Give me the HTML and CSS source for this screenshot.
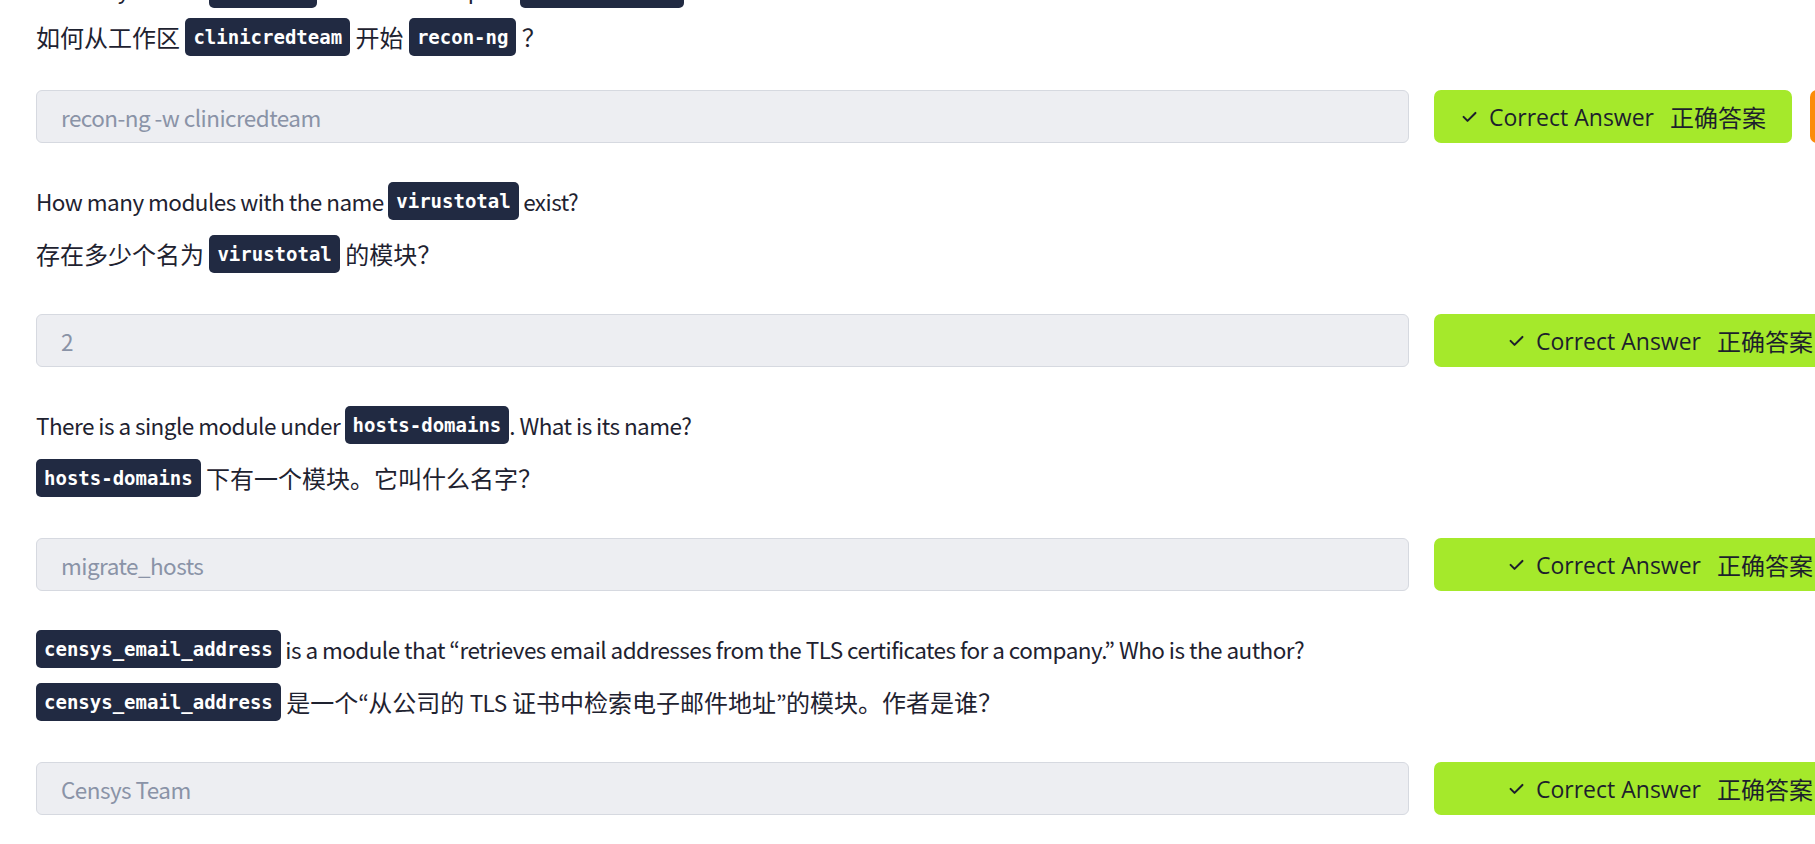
FILE: index.html
```html
<!DOCTYPE html>
<html lang="zh-CN">
<head>
<meta charset="utf-8">
<title>recon-ng questions</title>
<link rel="stylesheet" href="styles.css">
</head>
<body>
<main class="page">
  <section class="question question--first">
    <p class="q-en" lang="en">How do you start <code class="tag">recon-ng</code> with the workspace <code class="tag">clinicredteam</code>?</p>
    <p class="q-cn">如何从工作区 <code class="tag">clinicredteam</code> 开始 <code class="tag">recon-ng</code> ？</p>
    <div class="answer-row">
      <input class="answer" type="text" readonly value="recon-ng -w clinicredteam">
      <div class="actions">
        <button class="btn-correct btn-correct--compact" type="button">
          <svg class="check" viewBox="0 0 24 24" width="19" height="19" aria-hidden="true"><path d="M4.5 12.5l5 5L19.5 7.5" fill="none" stroke="currentColor" stroke-width="2.6" stroke-linecap="round" stroke-linejoin="round"/></svg>
          <span class="label-en">Correct Answer</span>
          <span class="label-cn">正确答案</span>
        </button>
        <button class="btn-next" type="button"></button>
      </div>
    </div>
  </section>

  <section class="question">
    <p class="q-en" lang="en">How many modules with the name <code class="tag">virustotal</code> exist?</p>
    <p class="q-cn">存在多少个名为 <code class="tag">virustotal</code> 的模块？</p>
    <div class="answer-row">
      <input class="answer" type="text" readonly value="2">
      <div class="actions">
        <button class="btn-correct" type="button">
          <svg class="check" viewBox="0 0 24 24" width="19" height="19" aria-hidden="true"><path d="M4.5 12.5l5 5L19.5 7.5" fill="none" stroke="currentColor" stroke-width="2.6" stroke-linecap="round" stroke-linejoin="round"/></svg>
          <span class="label-en">Correct Answer</span>
          <span class="label-cn">正确答案</span>
        </button>
      </div>
    </div>
  </section>

  <section class="question">
    <p class="q-en" lang="en">There is a single module under <code class="tag">hosts-domains</code>. What is its name?</p>
    <p class="q-cn"><code class="tag">hosts-domains</code> 下有一个模块。它叫什么名字？</p>
    <div class="answer-row">
      <input class="answer" type="text" readonly value="migrate_hosts">
      <div class="actions">
        <button class="btn-correct" type="button">
          <svg class="check" viewBox="0 0 24 24" width="19" height="19" aria-hidden="true"><path d="M4.5 12.5l5 5L19.5 7.5" fill="none" stroke="currentColor" stroke-width="2.6" stroke-linecap="round" stroke-linejoin="round"/></svg>
          <span class="label-en">Correct Answer</span>
          <span class="label-cn">正确答案</span>
        </button>
      </div>
    </div>
  </section>

  <section class="question">
    <p class="q-en" lang="en"><code class="tag">censys_email_address</code> is a module that “retrieves email addresses from the TLS certificates for a company.” Who is the author?</p>
    <p class="q-cn"><code class="tag">censys_email_address</code> 是一个<span class="latin" lang="en">“</span>从公司的 <span class="latin" lang="en">TLS</span> 证书中检索电子邮件地址<span class="latin" lang="en">”</span>的模块。作者是谁？</p>
    <div class="answer-row">
      <input class="answer" type="text" readonly value="Censys Team">
      <div class="actions">
        <button class="btn-correct" type="button">
          <svg class="check" viewBox="0 0 24 24" width="19" height="19" aria-hidden="true"><path d="M4.5 12.5l5 5L19.5 7.5" fill="none" stroke="currentColor" stroke-width="2.6" stroke-linecap="round" stroke-linejoin="round"/></svg>
          <span class="label-en">Correct Answer</span>
          <span class="label-cn">正确答案</span>
        </button>
      </div>
    </div>
  </section>
</main>
</body>
</html>
```

FILE: styles.css
```css
html, body {
  margin: 0;
  padding: 0;
  overflow: hidden;
  background: #ffffff;
}

body {
  font-family: "Noto Sans CJK SC", "Noto Sans", sans-serif;
  font-size: 24px;
  color: #1e2230;
}

.page {
  padding-left: 36px;
  margin-top: -30px;
}

.question + .question {
  margin-top: 39px;
}

.q-en,
.q-cn {
  margin: 0;
  height: 38px;
  line-height: 38px;
  white-space: nowrap;
}

.q-en {
  margin-bottom: 15px;
  font-family: "Noto Sans CJK JP", "Noto Sans CJK SC", sans-serif;
  font-size: 22.5px;
  letter-spacing: -0.55px;
}

.question--first .q-en {
  margin-bottom: 10px;
}

.latin {
  font-family: "Noto Sans CJK JP", sans-serif;
  font-size: 22.5px;
  letter-spacing: -0.55px;
}

.tag {
  display: inline-block;
  box-sizing: border-box;
  height: 38px;
  padding: 0 8px;
  line-height: 38px;
  vertical-align: top;
  background: #212a42;
  color: #ffffff;
  border-radius: 5px;
  font-family: "DejaVu Sans Mono", "Liberation Mono", monospace;
  font-weight: bold;
  font-size: 19px;
  letter-spacing: 0;
}

.answer-row {
  display: flex;
  align-items: center;
  gap: 25px;
  margin-top: 41px;
}

.question--first .answer-row {
  margin-top: 34px;
}

.answer {
  flex: 0 0 auto;
  box-sizing: border-box;
  width: 1373px;
  height: 53px;
  padding: 0 24px;
  border: 1px solid #d6d9e0;
  border-radius: 6px;
  background: #edeef2;
  color: #8a93a7;
  font-family: "Noto Sans CJK JP", "Noto Sans CJK SC", sans-serif;
  font-size: 22.5px;
  letter-spacing: -0.55px;
  outline: none;
}

.actions {
  display: flex;
  gap: 18px;
  flex: 0 0 auto;
}

.btn-correct {
  flex: 0 0 auto;
  box-sizing: border-box;
  width: 452px;
  height: 53px;
  border: none;
  border-radius: 7px;
  background: #a5e92b;
  color: #1d1f2c;
  display: flex;
  align-items: center;
  justify-content: center;
  padding: 0;
  cursor: pointer;
}

.btn-correct--compact {
  width: 358px;
}

.check {
  flex: 0 0 auto;
  margin-right: 10px;
}

.label-en {
  font-family: "Open Sans", "Noto Sans", sans-serif;
  font-size: 23px;
  margin-right: 16px;
}

.label-cn {
  font-family: "Noto Sans CJK SC", sans-serif;
  font-size: 24px;
}

.btn-next {
  flex: 0 0 auto;
  width: 140px;
  height: 53px;
  border: none;
  border-radius: 7px;
  background: #fb8c0a;
}
```
